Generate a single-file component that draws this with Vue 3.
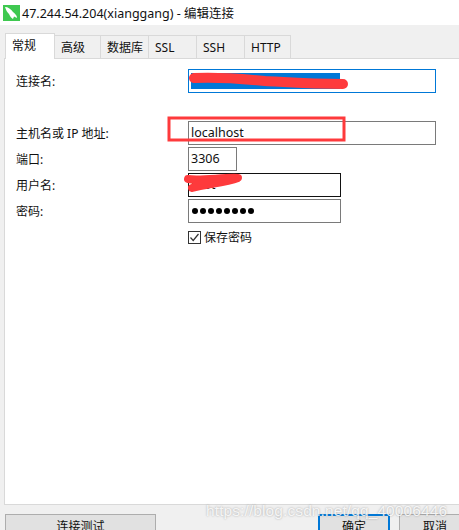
<template>
  <div class="window">
    <div class="titlebar">
      <svg class="app-icon" viewBox="0 0 17 16">
        <rect width="17" height="16" fill="#3fc850" />
        <path d="M2 2 C5 2 8 4 10 7 C12 9 14 10 14 13 L11 11.5 L10 14 C8 13 7 11 6 9 C4 7 3 5 2 2 Z" fill="#ffffff" />
      </svg>
      <span class="title">47.244.54.204(xianggang) - 编辑连接</span>
    </div>

    <div class="tabs">
      <div
        v-for="tab in tabs"
        :key="tab.label"
        class="tab"
        :class="{ active: tab.active }"
        :style="{ width: tab.width + 'px' }"
      >{{ tab.label }}</div>
    </div>

    <div class="panel">
      <div class="row row-name">
        <label>连接名:</label>
        <div class="field focused"><span class="selection"></span></div>
      </div>
      <div class="row row-host">
        <label>主机名或 IP 地址:</label>
        <div class="field">localhost</div>
      </div>
      <div class="row">
        <label>端口:</label>
        <div class="field port">3306</div>
      </div>
      <div class="row">
        <label>用户名:</label>
        <div class="field short dark">root</div>
      </div>
      <div class="row">
        <label>密码:</label>
        <div class="field short dots">
          <span v-for="n in 8" :key="n" class="dot"></span>
        </div>
      </div>
      <div class="row row-check">
        <label></label>
        <div class="check">
          <svg class="checkbox" viewBox="0 0 13 13">
            <rect x="0.5" y="0.5" width="12" height="12" fill="#fff" stroke="#333" />
            <path d="M2.5 6.5 L5.2 9.5 L10.5 3" fill="none" stroke="#333" stroke-width="1.2" />
          </svg>
          <span>保存密码</span>
        </div>
      </div>
    </div>

    <div class="actions">
      <button class="btn test">连接测试</button>
      <button class="btn ok">确定</button>
      <button class="btn cancel">取消</button>
    </div>

    <svg class="marks" viewBox="0 0 459 530">
      <path d="M194 78 C215 77 245 79 265 81 C285 82 310 84 343 84" fill="none" stroke="#fe3a3c" stroke-width="10" stroke-linecap="round" />
      <rect x="169" y="118" width="175" height="22" fill="none" stroke="#fe3a3c" stroke-width="3" />
      <path d="M188 179 C200 181 225 177 238 178 C225 183 205 184 192 188" fill="none" stroke="#fe3a3c" stroke-width="8" stroke-linecap="round" stroke-linejoin="round" />
    </svg>

    <div class="watermark">https://blog.csdn.net/qq_40006446</div>
  </div>
</template>

<script setup>
const tabs = [
  { label: '常规', width: 50, active: true },
  { label: '高级', width: 46 },
  { label: '数据库', width: 48 },
  { label: 'SSL', width: 48 },
  { label: 'SSH', width: 48 },
  { label: 'HTTP', width: 46 }
];
</script>

<style>
body {
  margin: 0;
}
</style>

<style scoped>
.window {
  position: relative;
  width: 459px;
  height: 530px;
  overflow: hidden;
  background: #f0f0f0;
  color: #111;
  font-family: "Noto Sans", "Noto Sans CJK SC", sans-serif;
  font-size: 12px;
}

.titlebar {
  height: 25px;
  background: #ffffff;
  display: flex;
  align-items: center;
  gap: 2px;
  padding-left: 3px;
  font-size: 12.5px;
}

.app-icon {
  width: 17px;
  height: 16px;
  flex-shrink: 0;
}

.tabs {
  display: flex;
  align-items: flex-end;
  height: 33px;
  padding-left: 5px;
}

.tab {
  box-sizing: border-box;
  height: 23px;
  line-height: 23px;
  padding-left: 6px;
  background: #f0f0f0;
  border: 1px solid #d9d9d9;
  border-left: none;
  border-bottom: none;
}

.tab.active {
  height: 26px;
  line-height: 24px;
  background: #ffffff;
  border-left: 1px solid #d9d9d9;
  margin-bottom: -1px;
  position: relative;
  z-index: 1;
}

.panel {
  box-sizing: border-box;
  height: 447px;
  margin-left: 4px;
  padding-top: 10px;
  background: #ffffff;
  border: 1px solid #d9d9d9;
  border-right: none;
  display: flex;
  flex-direction: column;
  gap: 2px;
}

.row {
  display: flex;
  align-items: center;
  height: 24px;
}

.row-host {
  margin-top: 26px;
}

.row-check {
  margin-top: 5px;
  height: 16px;
}

.row label {
  width: 183px;
  padding-left: 11px;
  box-sizing: border-box;
  flex-shrink: 0;
}

.field {
  box-sizing: border-box;
  width: 248px;
  height: 24px;
  line-height: 21px;
  padding-left: 2px;
  border: 1px solid #7a7a7a;
  background: #ffffff;
  font-size: 12.5px;
}

.field.focused {
  border-color: #0078d7;
  padding: 2px;
}

.selection {
  display: block;
  width: 149px;
  height: 16px;
  margin-top: 1px;
  background: #0078d7;
}

.field.port {
  width: 49px;
}

.field.short {
  width: 153px;
}

.field.dark {
  border-color: #111;
}

.field.dots {
  display: flex;
  align-items: center;
  gap: 2px;
  padding-left: 3px;
}

.dot {
  width: 6px;
  height: 6px;
  border-radius: 50%;
  background: #000;
}

.check {
  display: flex;
  align-items: center;
  gap: 3px;
  margin-bottom: 2px;
}

.checkbox {
  width: 13px;
  height: 13px;
}

.actions {
  display: flex;
  margin-top: 9px;
  padding-left: 5px;
}

.btn {
  box-sizing: border-box;
  height: 26px;
  padding: 0 0 3px;
  background: #e1e1e1;
  border: 1px solid #adadad;
  color: #111;
  font-family: inherit;
  font-size: 12px;
  flex-shrink: 0;
}

.btn.test {
  width: 151px;
}

.btn.ok {
  width: 72px;
  margin-left: 162px;
  border: 2px solid #0078d7;
}

.btn.cancel {
  width: 72px;
  margin-left: 9px;
}

.marks {
  position: absolute;
  left: 0;
  top: 0;
  width: 459px;
  height: 530px;
  pointer-events: none;
}

.watermark {
  position: absolute;
  left: 206px;
  top: 502px;
  font-family: "Liberation Sans", sans-serif;
  font-size: 15.5px;
  letter-spacing: 0.1px;
  color: rgba(255, 255, 255, 0.85);
  text-shadow: 0 0 2px rgba(110, 110, 110, 0.6);
  white-space: nowrap;
}
</style>
